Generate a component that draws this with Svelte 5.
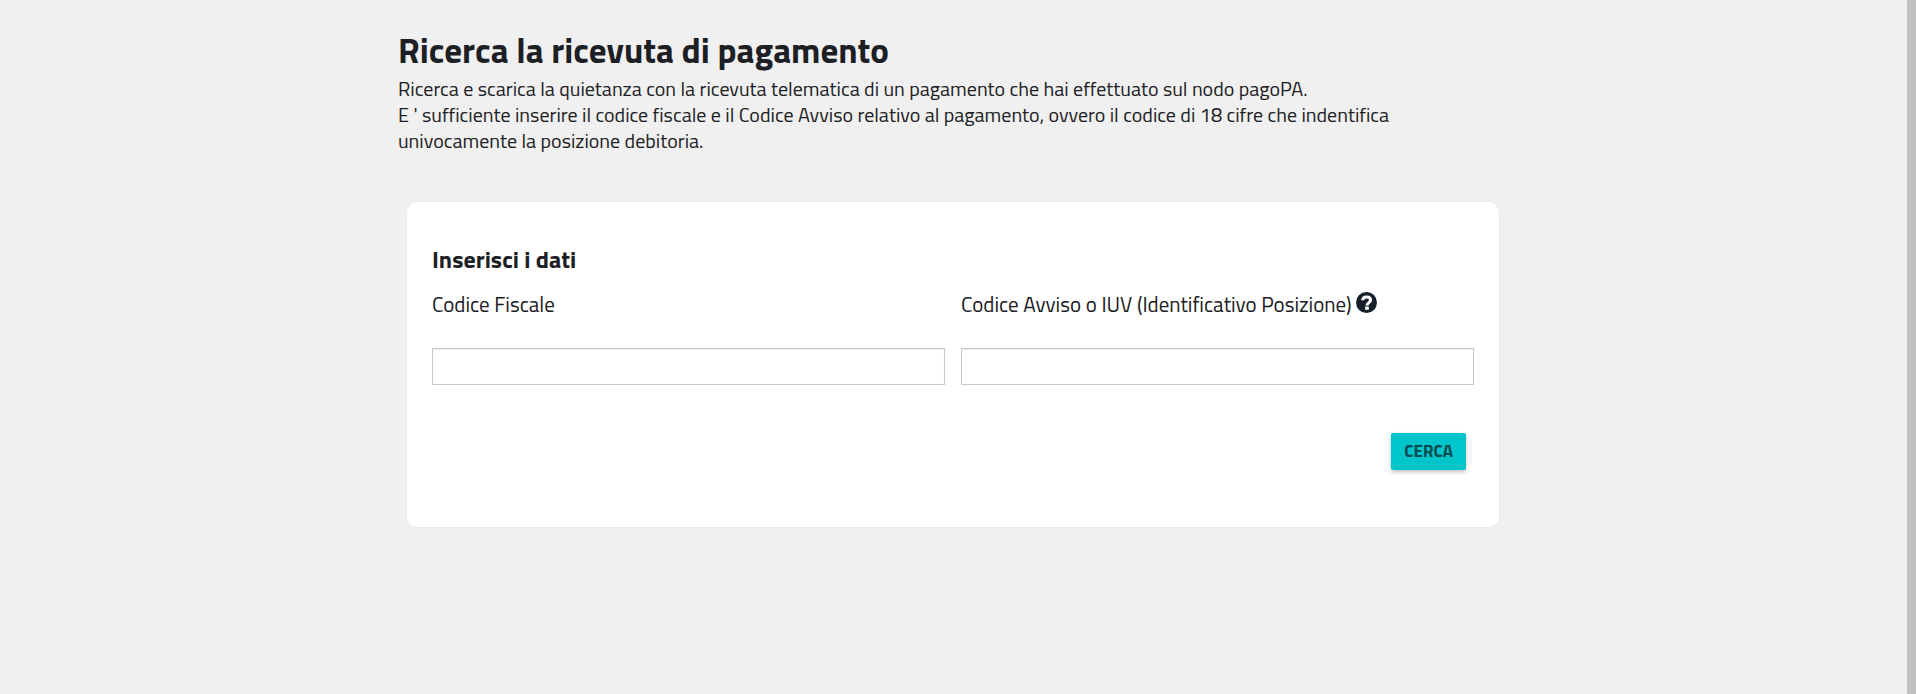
<script lang="ts">
    let codiceFiscale = "";
    let codiceAvviso = "";

    function cerca() {
        codiceFiscale = codiceFiscale.trim().toUpperCase();
        codiceAvviso = codiceAvviso.trim();
    }
</script>

<div class="page">
    <main class="container">
        <h1>Ricerca la ricevuta di pagamento</h1>
        <p class="intro">
            Ricerca e scarica la quietanza con la ricevuta telematica di un pagamento che hai effettuato sul nodo pagoPA.<br />
            E ' sufficiente inserire il codice fiscale e il Codice Avviso relativo al pagamento, ovvero il codice di 18 cifre che indentifica
            univocamente la posizione debitoria.
        </p>

        <form class="card" on:submit|preventDefault={cerca}>
            <h2>Inserisci i dati</h2>
            <div class="fields">
                <div class="field">
                    <label for="cf">Codice Fiscale</label>
                    <input id="cf" type="text" bind:value={codiceFiscale} />
                </div>
                <div class="field">
                    <label for="iuv">
                        Codice Avviso o IUV (Identificativo Posizione)
                        <svg class="help" viewBox="0 0 21 21" aria-hidden="true">
                            <circle cx="10.5" cy="10.5" r="10.5" />
                            <path class="hook" d="M6.700 8.200C6.700 5.800 8.300 5 10.600 5s4 1.100 4 3c0 2.600-3.600 2.600-3.600 5.500" />
                            <path class="dot" d="M9.200 14.500h3.600v3.300h-3.600z" />
                        </svg>
                    </label>
                    <input id="iuv" type="text" bind:value={codiceAvviso} />
                </div>
            </div>
            <div class="actions">
                <button type="submit">CERCA</button>
            </div>
        </form>
    </main>
</div>

<style>
    :global(body) {
        background: #f0f0f0;
    }

    .page {
        box-sizing: border-box;
        min-height: 100vh;
        border-right: 9px solid #c1c1c1;
        background: #f0f0f0;
        color: #1c2024;
        font-family: "Titillium Web", Roboto, "Liberation Sans", sans-serif;
        font-size: 20px;
        line-height: 26px;
    }

    .container {
        box-sizing: border-box;
        max-width: 1141px;
        margin: 0 auto;
        padding: 28px 16px 28px 15px;
    }

    h1 {
        margin: 0 0 4px;
        font-size: 35px;
        line-height: 44px;
        font-weight: 700;
    }

    .intro {
        max-width: 1020px;
        margin: 0 0 48px;
        font-weight: 400;
    }

    .card {
        margin: 0 9px;
        padding: 43px 25px 57px;
        border-radius: 10px;
        background: #fff;
        box-shadow: 0 0 2px rgba(0, 0, 0, 0.08);
    }

    h2 {
        margin: 0 0 17px;
        font-size: 24px;
        line-height: 28px;
        font-weight: 700;
    }

    .fields {
        display: grid;
        grid-template-columns: 1fr 1fr;
        gap: 16px;
    }

    label {
        display: flex;
        align-items: center;
        gap: 4px;
        height: 28px;
        margin-bottom: 30px;
        font-size: 21px;
        font-weight: 400;
    }

    .help {
        width: 21px;
        height: 21px;
        margin-bottom: 4px;
        fill: #17202a;
    }

    .hook {
        fill: none;
        stroke: #fff;
        stroke-width: 3;
    }

    .dot {
        fill: #fff;
    }

    input {
        display: block;
        box-sizing: border-box;
        width: 100%;
        height: 37px;
        padding: 4px 8px;
        border: 1px solid #c8c8c8;
        background: #fff;
        box-shadow: inset 0 1px 1px rgba(0, 0, 0, 0.08);
        color: inherit;
        font: inherit;
    }

    .actions {
        display: flex;
        justify-content: flex-end;
        margin: 48px 8px 0 0;
    }

    button {
        height: 37px;
        padding: 0 13px 2px;
        border: 0;
        border-radius: 2px;
        background: #00c5ca;
        box-shadow: 0 2px 4px rgba(0, 0, 0, 0.25);
        color: #0b4a50;
        font-family: inherit;
        font-size: 17px;
        font-weight: 700;
        cursor: pointer;
    }
</style>
